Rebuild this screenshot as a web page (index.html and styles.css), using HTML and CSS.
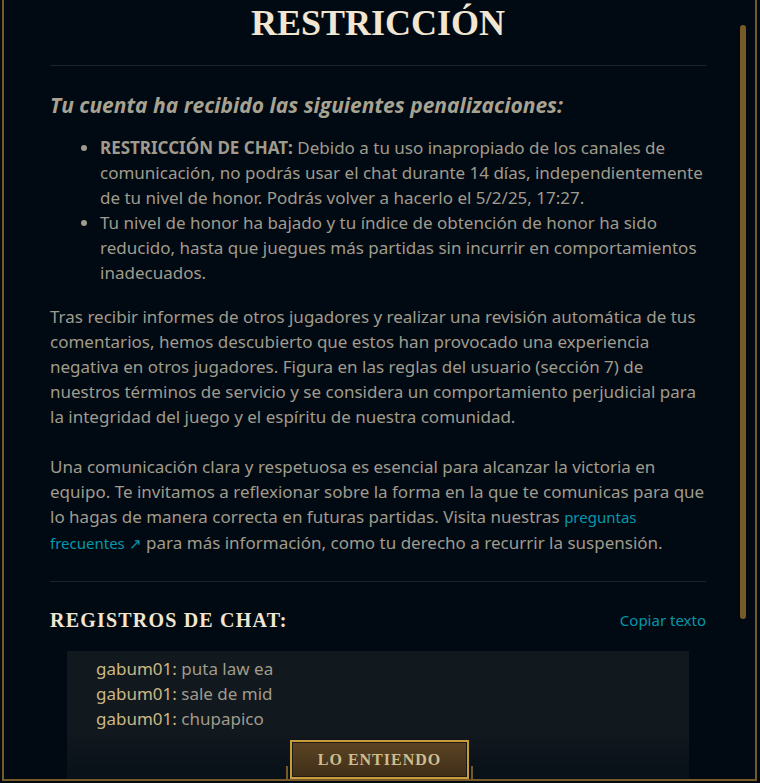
FILE: index.html
```html
<!DOCTYPE html>
<html lang="es">
<head>
  <meta charset="UTF-8">
  <title>Restricción</title>
  <link rel="stylesheet" href="styles.css">
</head>
<body>

<div class="frame">
  <div class="content">
    <h1 class="title">RESTRICCIÓN</h1>

    <h3 class="subtitle">Tu cuenta ha recibido las siguientes penalizaciones:</h3>
    <ul class="penalties">
      <li><strong>RESTRICCIÓN DE CHAT:</strong> Debido a tu uso inapropiado de los canales de comunicación, no podrás usar el chat durante 14 días, independientemente de tu nivel de honor. Podrás volver a hacerlo el 5/2/25, 17:27.</li>
      <li>Tu nivel de honor ha bajado y tu índice de obtención de honor ha sido reducido, hasta que juegues más partidas sin incurrir en comportamientos inadecuados.</li>
    </ul>

    <p>Tras recibir informes de otros jugadores y realizar una revisión automática de tus comentarios, hemos descubierto que estos han provocado una experiencia negativa en otros jugadores. Figura en las reglas del usuario (sección 7) de nuestros términos de servicio y se considera un comportamiento perjudicial para la integridad del juego y el espíritu de nuestra comunidad.</p>

    <p class="last">Una comunicación clara y respetuosa es esencial para alcanzar la victoria en equipo. Te invitamos a reflexionar sobre la forma en la que te comunicas para que lo hagas de manera correcta en futuras partidas. Visita nuestras <a href="#" class="link">preguntas frecuentes &#8599;</a> para más información, como tu derecho a recurrir la suspensión.</p>

    <div class="logs-head">
      <h2>REGISTROS DE CHAT:</h2>
      <a href="#" class="copy">Copiar texto</a>
    </div>

    <div class="logs">
      <div class="line"><span class="who">gabum01:</span> puta law ea</div>
      <div class="line"><span class="who">gabum01:</span> sale de mid</div>
      <div class="line"><span class="who">gabum01:</span> chupapico</div>
    </div>
  </div>

  <div class="scrollbar"></div>

  <div class="footer">
    <span class="tick"></span>
    <button class="ok">LO ENTIENDO</button>
    <span class="tick"></span>
  </div>
</div>

</body>
</html>
```

FILE: styles.css
```css
html, body {
  margin: 0;
  padding: 0;
  background: #010a13;
  overflow: hidden;
}

body {
  font-family: "Noto Sans", Arial, sans-serif;
  color: #a09b8c;
}

.frame {
  position: relative;
  margin: 0 3px 0 2px;
  height: 781px;
  box-sizing: border-box;
  border-left: 2px solid #785a28;
  border-right: 2px solid #785a28;
  border-bottom: 2px solid #785a28;
  overflow: hidden;
}

.content {
  padding: 0 49px 0 46px;
}

.title {
  margin: 0;
  padding: 1px 0 20px;
  text-align: center;
  font-family: "Liberation Serif", serif;
  font-size: 36px;
  line-height: 44px;
  font-weight: bold;
  color: #f0e6d2;
  border-bottom: 1px solid #1e2328;
}

.subtitle {
  margin: 24px 0 0;
  font-family: "Open Sans", sans-serif;
  font-style: italic;
  font-weight: bold;
  font-size: 21px;
  line-height: 30px;
  color: #a8a290;
}

.penalties {
  margin: 15px 0 0;
  padding-left: 50px;
  font-size: 17px;
  line-height: 25px;
}

.penalties strong {
  font-weight: bold;
}

p {
  margin: 19px 0 0;
  font-size: 17px;
  line-height: 25px;
}

p + p {
  margin-top: 25px;
}

p.last {
  padding-bottom: 25px;
  border-bottom: 1px solid #1e2328;
}

.link {
  color: #0596aa;
  font-size: 15px;
  text-decoration: none;
}

.logs-head {
  display: flex;
  justify-content: space-between;
  align-items: center;
  margin-top: 24px;
}

.logs-head h2 {
  margin: 0;
  font-family: "Liberation Serif", serif;
  font-size: 20px;
  letter-spacing: 1.2px;
  line-height: 28px;
  color: #f0e6d2;
}

.copy {
  color: #0596aa;
  font-size: 15px;
  text-decoration: none;
}

.logs {
  margin: 17px 17px 0;
  padding: 5px 29px 60px;
  background: #11181e;
  font-size: 17px;
  line-height: 25px;
}

.who {
  color: #cbb885;
}

.scrollbar {
  position: absolute;
  top: 25px;
  right: 9px;
  width: 6px;
  height: 594px;
  border-radius: 3px;
  background: #785a28;
}

.footer {
  position: absolute;
  left: 0;
  right: 0;
  bottom: 0;
  height: 48px;
  display: flex;
  justify-content: center;
  align-items: flex-end;
  background: linear-gradient(to bottom, rgba(1,10,19,0), rgba(1,10,19,0.55));
}

.tick {
  width: 2px;
  height: 13px;
  background: #785a28;
}

.ok {
  margin: 0 2px;
  width: 179px;
  height: 39px;
  border: 2px solid #c89b3c;
  box-shadow: inset 0 0 0 1px #1e1a14;
  background: linear-gradient(to bottom, #5b4424, #3f2e18);
  color: #cdbe91;
  font-family: "Liberation Serif", serif;
  font-weight: bold;
  font-size: 16px;
  letter-spacing: 1px;
  padding: 0;
  cursor: pointer;
}
```
